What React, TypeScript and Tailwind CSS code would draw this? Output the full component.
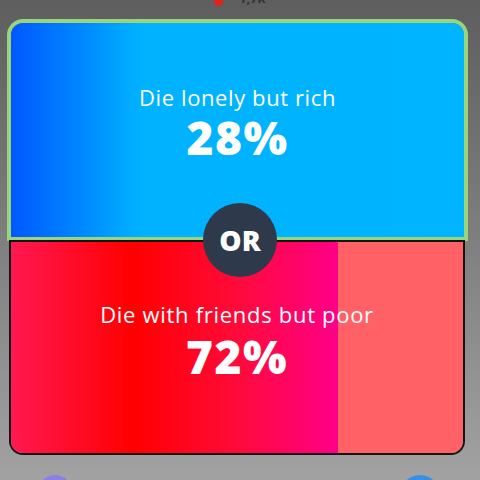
import React from 'react'

const poll = {
  top: { label: 'Die lonely but rich', pct: 28 },
  bottom: { label: 'Die with friends but poor', pct: 72 },
}

const font = { fontFamily: '"Open Sans", Lato, sans-serif' }

export default function App() {
  return (
    <div
      className="relative w-[480px] h-[480px] overflow-hidden bg-gradient-to-b from-[#5e5e5e] to-[#a2a2a2]"
      style={font}
    >
      {/* status strip, mostly cut off */}
      <div className="h-[19px] flex items-start pl-[214px] gap-[16px]">
        <div className="w-[9px] h-[14px] -mt-[8px] rounded-b-full bg-[#e0241c]" />
        <span className="text-[13px] leading-[14px] -mt-[9px] text-[#333] font-bold">1,7k</span>
      </div>

      {/* top option */}
      <div className="ml-[7px] w-[461px] h-[222px] border-4 border-[#9ad47c] rounded-t-[16px] overflow-hidden">
        <div className="h-full flex flex-col items-center pt-[61px] text-white bg-[linear-gradient(90deg,#0058ff_0%,#0086ff_15%,#00a8ff_25%,#00b2ff_29%,#00b4ff_100%)]">
          <div className="text-[22px] leading-[26px] tracking-[0.6px]">{poll.top.label}</div>
          <div className="text-[46px] leading-[50px] font-extrabold tracking-[1.5px] mt-[2px]">{poll.top.pct}%</div>
        </div>
      </div>

      {/* bottom option */}
      <div className="ml-[9px] -mt-px w-[456px] h-[215px] border-2 border-[#141414] rounded-b-[14px] overflow-hidden">
        <div className="h-full flex flex-col items-center pt-[59px] text-white bg-[linear-gradient(90deg,#ff1852_0%,#ff0000_27%,#ff0a3a_50%,#ff0088_72.3%,#ff6167_72.3%,#ff6167_100%)]">
          <div className="text-[22px] leading-[26px] tracking-[0.7px]">{poll.bottom.label}</div>
          <div className="text-[46px] leading-[50px] font-extrabold tracking-[1.5px] mt-[4px]">{poll.bottom.pct}%</div>
        </div>
      </div>

      {/* avatars peeking at bottom */}
      <div className="flex justify-between px-[38px] mt-[20px]">
        <div className="w-[34px] h-[34px] rounded-full bg-[#8c7fe6]" />
        <div className="w-[40px] h-[40px] rounded-full bg-[#3b8fe2] mr-[2px]" />
      </div>

      {/* OR badge */}
      <div className="absolute left-[203px] top-[203px] w-[74px] h-[74px] rounded-full bg-[#2e3a4b] flex items-center justify-center">
        <span className="text-white text-[28px] font-extrabold leading-none">OR</span>
      </div>
    </div>
  )
}
